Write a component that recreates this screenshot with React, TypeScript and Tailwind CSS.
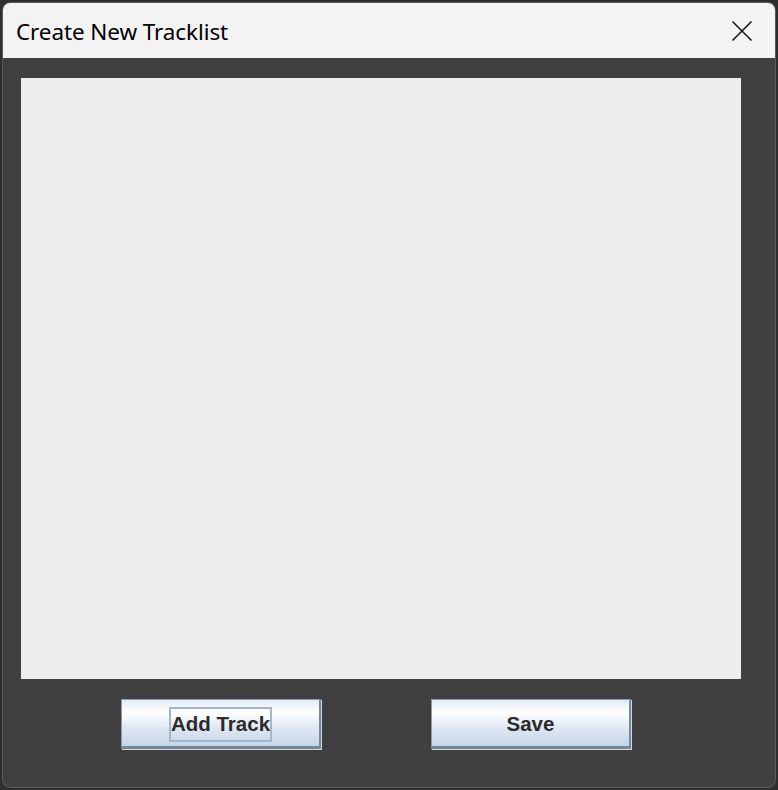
import React from "react";

function SwingButton({ label, focused }: { label: string; focused?: boolean }) {
  return (
    <button
      type="button"
      className="w-[200px] h-[50px] border border-[#8a99ab] border-b-[3px] border-r-[2px] border-b-[#778798] border-r-[#778798] shadow-[1px_1px_0_#c9d9ea] bg-[linear-gradient(to_bottom,#e4ecf5_0%,#ffffff_28%,#dfe8f2_60%,#c5d6e8_100%)] flex items-center justify-center pt-[3px]"
    >
      <span
        className={
          "px-0 leading-none text-[20.5px] font-bold text-[#2b2b2b] [font-family:'Liberation_Sans',Arial,sans-serif] py-[5px] " +
          (focused ? "border-2 border-[#a3b6cc]" : "border-2 border-transparent")
        }
      >
        {label}
      </span>
    </button>
  );
}

export default function App() {
  return (
    <div className="w-[778px] h-[790px] bg-[#2f2d2d] p-[2px]">
      <div className="w-[774px] h-[786px] rounded-[8px] overflow-hidden border border-[#5a5a5a] bg-[#404040] flex flex-col">
        {/* title bar */}
        <div className="h-[55px] bg-[#f3f3f3] flex items-center justify-between pl-[13px] pr-[22px] shrink-0">
          <span className="text-[22.5px] text-black [font-family:'Noto_Sans','Open_Sans',sans-serif] tracking-[-0.1px] pt-[3px]">
            Create New Tracklist
          </span>
          <svg width="22" height="22" viewBox="0 0 22 22" className="mt-[1px]">
            <path d="M1.5 1.5 L20.5 20.5 M20.5 1.5 L1.5 20.5" stroke="#1a1a1a" strokeWidth="1.6" fill="none" />
          </svg>
        </div>

        {/* body */}
        <div className="flex flex-col pt-[20px] pl-[18px]">
          <div className="w-[720px] h-[601px] bg-[#ededed]" />
          <div className="flex gap-[110px] pl-[100px] pt-[20px]">
            <SwingButton label="Add Track" focused />
            <SwingButton label="Save" />
          </div>
        </div>
      </div>
    </div>
  );
}
